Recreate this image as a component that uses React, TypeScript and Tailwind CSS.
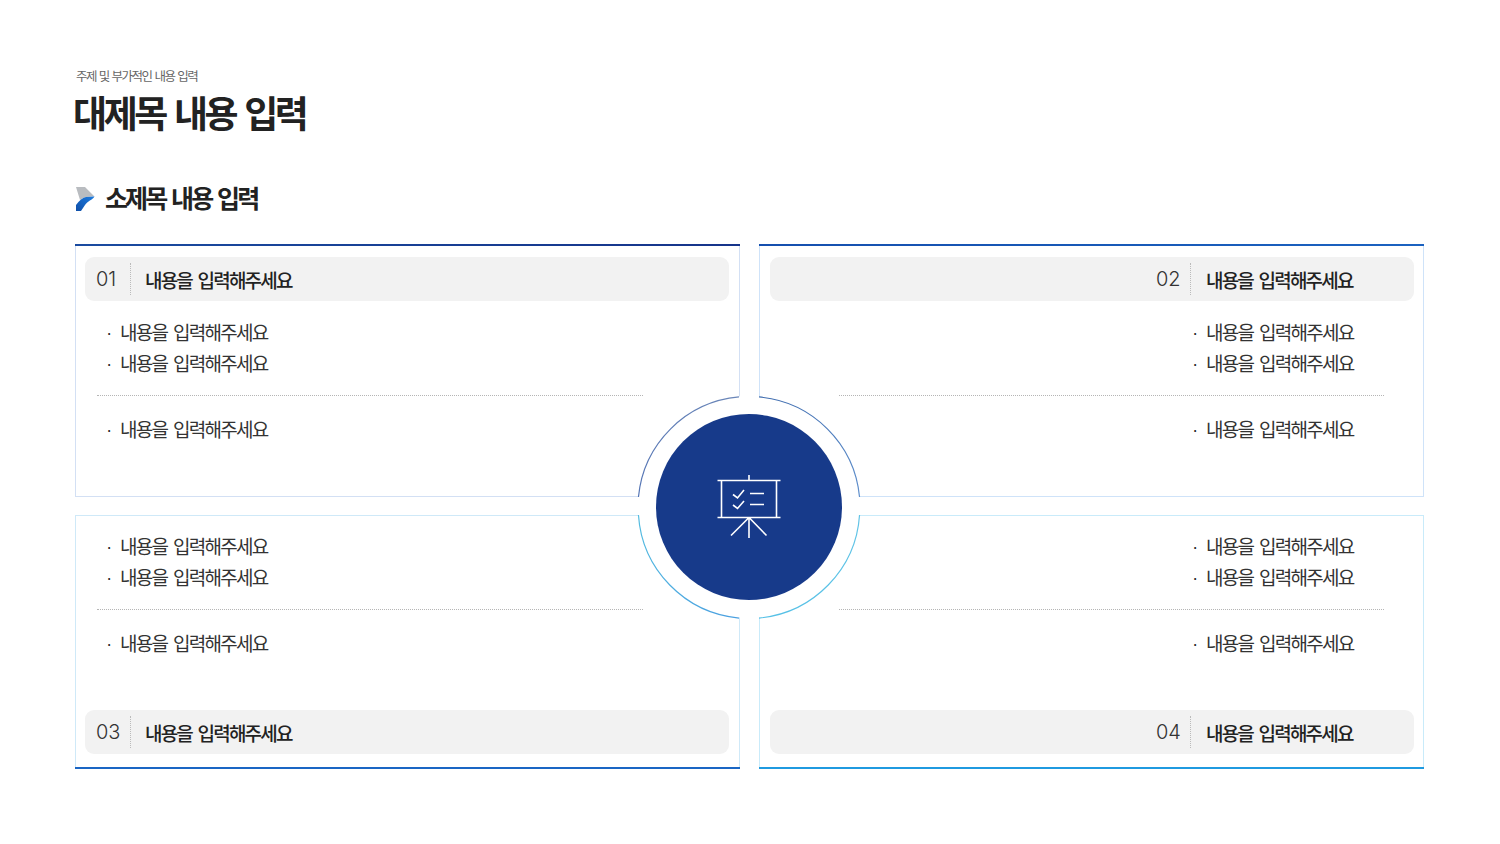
import React from "react";

const FONT = "[font-family:'Noto_Sans_CJK_KR','Noto_Sans',sans-serif]";
const TEXT = "내용을 입력해주세요";

function Item({ right }: { right?: boolean }) {
  return (
    <div className={`flex h-[31px] items-center text-[19px] font-normal tracking-[-1.7px] [word-spacing:3px] text-[#333] ${right ? "pl-[433px]" : "pl-[31px]"}`}>
      <span className="ml-[-2px] w-[15px] text-[15px] leading-none text-[#222]">·</span>
      <span>{TEXT}</span>
    </div>
  );
}

function Bar({ n, right }: { n: string; right?: boolean }) {
  return (
    <div className={`flex h-[44px] items-center rounded-[9px] bg-[#f2f2f2] ${right ? "ml-[10px] mr-[9px] pl-[386px]" : "ml-[9px] mr-[10px] pl-[11px]"}`}>
      <span className="w-[34px] font-['Inter',sans-serif] text-[20px] font-light text-[#333]">{n}</span>
      <span className="h-[32px] border-l border-dotted border-[#bbb]" />
      <span className={`pt-[2px] text-[19px] font-medium tracking-[-1.8px] [word-spacing:3px] text-[#222] ${right ? "ml-[15px]" : "ml-[14px]"}`}>{TEXT}</span>
    </div>
  );
}

function Body({ right }: { right?: boolean }) {
  return (
    <div>
      <Item right={right} />
      <Item right={right} />
      <div className={`mt-[16px] mb-[18px] border-t border-dotted border-[#b5b5b5] ${right ? "ml-[79px] w-[545px]" : "ml-[21px] w-[546px]"}`} />
      <Item right={right} />
    </div>
  );
}

function Card({ n, pos, right, lineClass, sideClass }: { n: string; pos: "top" | "bottom"; right?: boolean; lineClass: string; sideClass: string }) {
  return (
    <div className={`relative flex flex-col border ${sideClass} ${pos === "top" ? "h-[253px] pt-[12px]" : "h-[254px] pt-[15px]"}`}>
      <div className={`absolute left-[-1px] right-[-1px] h-[2px] ${lineClass} ${pos === "top" ? "top-[-1px]" : "bottom-[-1px]"}`} />
      {pos === "top" ? (
        <>
          <Bar n={n} right={right} />
          <div className="mt-[16px]"><Body right={right} /></div>
        </>
      ) : (
        <>
          <Body right={right} />
          <div className="mt-[51px]"><Bar n={n} right={right} /></div>
        </>
      )}
    </div>
  );
}

function Arc({ d, id, from, to, x1, y1, x2, y2 }: { d: string; id: string; from: string; to: string; x1: number; y1: number; x2: number; y2: number }) {
  return (
    <>
      <defs>
        <linearGradient id={id} gradientUnits="userSpaceOnUse" x1={x1} y1={y1} x2={x2} y2={y2}>
          <stop offset="0" stopColor={from} />
          <stop offset="1" stopColor={to} />
        </linearGradient>
      </defs>
      <path d={d} fill="none" stroke={`url(#${id})`} strokeWidth="1.2" />
    </>
  );
}

function Hub() {
  return (
    <div className="absolute left-[563px] top-[152px] flex h-[222px] w-[222px] items-center justify-center rounded-full bg-white">
      <svg className="absolute inset-0 overflow-visible" width="222" height="222" viewBox="0 0 222 222">
        <Arc id="a1" d="M101 0.95 A111 111 0 0 0 0.45 101" from="#6a86b8" to="#5575b5" x1={101} y1={1} x2={0} y2={101} />
        <Arc id="a2" d="M121 0.95 A111 111 0 0 1 221.55 101" from="#3f6cae" to="#5f8fcc" x1={121} y1={1} x2={222} y2={101} />
        <Arc id="a3" d="M0.45 119 A111 111 0 0 0 101 222.05" from="#55bde0" to="#4a9fe0" x1={0} y1={119} x2={101} y2={222} />
        <Arc id="a4" d="M221.55 119 A111 111 0 0 1 121 222.05" from="#62c4e6" to="#55c0e6" x1={222} y1={119} x2={121} y2={222} />
      </svg>
      <div className="relative flex h-[186px] w-[186px] items-center justify-center rounded-full bg-[#173a8a]">
        <svg width="66" height="66" viewBox="0 0 66 66" fill="none" stroke="#fff" strokeWidth="1.6" className="translate-y-[-1px]">
          <path d="M1.5 7.5H64.5M1.5 44.5H64.5M5.5 7.5V44.5M60.5 7.5V44.5M33 2V7.5M33 44.5V65M33 44.5L15 62.5M33 44.5L50.5 62.5" />
          <path d="M17 21.5L21.5 25L28 17M17 32L21.5 35.5L28 28M34 20.5H48M34 31.5H48" />
        </svg>
      </div>
    </div>
  );
}

export default function App() {
  return (
    <div className={`min-h-[844px] bg-white pl-[75px] pt-[67px] ${FONT}`}>
      <div className="ml-[1px] text-[12.5px] leading-[18px] tracking-[-1.5px] [word-spacing:1.5px] text-[#666]">주제 및 부가적인 내용 입력</div>
      <h1 className="ml-[-2px] mt-[3px] text-[37px] font-bold leading-[48px] tracking-[-3.4px] [word-spacing:4px] text-[#222]">대제목 내용 입력</h1>
      <div className="mt-[37px] flex h-[50px] items-center">
        <svg width="20" height="25" viewBox="0 0 20 25">
          <defs>
            <linearGradient id="chev" x1="0" y1="1" x2="1" y2="0">
              <stop offset="0" stopColor="#0f4fa8" />
              <stop offset="1" stopColor="#1d7ce0" />
            </linearGradient>
          </defs>
          <path d="M1 1H10L19.5 10.5L11 11C9 11.3 7 12.5 5 14Z" fill="#b9bcc0" />
          <path d="M1 19C4 14.5 8 11.5 11 11L19.5 10.5C17.5 14 12.5 15 10 19L6 25H1Z" fill="url(#chev)" />
        </svg>
        <span className="ml-[10px] text-[25px] font-semibold tracking-[-2.9px] [word-spacing:3px] text-[#222]">소제목 내용 입력</span>
      </div>
      <div className="relative mt-[21px] grid w-[1349px] grid-cols-2 gap-x-[19px] gap-y-[18px]">
        <Card n="01" pos="top" lineClass="bg-gradient-to-r from-[#1a4ba0] to-[#16348a]" sideClass="border-[#d3e0f4]" />
        <Card n="02" pos="top" right lineClass="bg-gradient-to-r from-[#154fae] to-[#1b62c0]" sideClass="border-[#cfe3f9]" />
        <Card n="03" pos="bottom" lineClass="bg-[#1a66c4]" sideClass="border-[#cfe9f8]" />
        <Card n="04" pos="bottom" right lineClass="bg-[#1f9ae0]" sideClass="border-[#c9ebfa]" />
        <Hub />
      </div>
    </div>
  );
}
